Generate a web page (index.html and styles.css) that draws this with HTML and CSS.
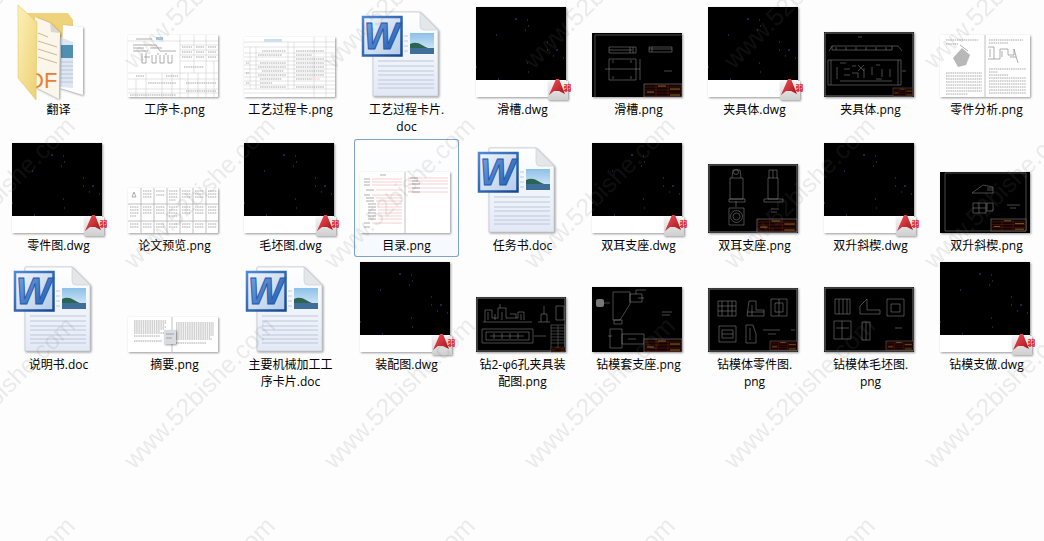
FILE: index.html
```html
<!DOCTYPE html>
<html lang="zh-CN">
<head>
    <meta charset="UTF-8">
    <title>Explorer</title>
    <link rel="stylesheet" href="styles.css">
</head>
<body>
    <!-- shared drawings -->
    <svg class="defs">
        <defs>
            <linearGradient id="pageFill" x1="0" y1="0" x2="0" y2="1">
                <stop offset="0" stop-color="#ffffff"/>
                <stop offset="1" stop-color="#e2e9f6"/>
            </linearGradient>
            <linearGradient id="tileFill" x1="0" y1="0" x2="1" y2="1">
                <stop offset="0" stop-color="#f1f5fb"/>
                <stop offset="1" stop-color="#b4cbe8"/>
            </linearGradient>
            <linearGradient id="tileEdge" x1="0" y1="0" x2="1" y2="1">
                <stop offset="0" stop-color="#4f8ad6"/>
                <stop offset="1" stop-color="#17478f"/>
            </linearGradient>
            <linearGradient id="wFill" x1="0" y1="0" x2="1" y2="1">
                <stop offset="0" stop-color="#7aa9e6"/>
                <stop offset="1" stop-color="#174fa8"/>
            </linearGradient>
            <linearGradient id="skyFill" x1="0" y1="0" x2="0" y2="1">
                <stop offset="0" stop-color="#8cc0e8"/>
                <stop offset="1" stop-color="#e2f0f8"/>
            </linearGradient>
            <linearGradient id="flapFill" x1="0" y1="0" x2="1" y2="1">
                <stop offset="0" stop-color="#fdf0b8"/>
                <stop offset="1" stop-color="#ecd071"/>
            </linearGradient>
            <linearGradient id="badgeFill" x1="0" y1="0" x2="0" y2="1">
                <stop offset="0" stop-color="#f4f4f4"/>
                <stop offset="1" stop-color="#cfcfcf"/>
            </linearGradient>
            <linearGradient id="aFill" x1="0" y1="0" x2="1" y2="1">
                <stop offset="0" stop-color="#f2555a"/>
                <stop offset="1" stop-color="#a5101a"/>
            </linearGradient>
            <pattern id="wmTile" width="200" height="200" patternUnits="userSpaceOnUse">
                <text class="wm-text" transform="translate(134 70) rotate(-45)">www.52bishe.com</text>
                <text class="wm-text" transform="translate(-66 70) rotate(-45)">www.52bishe.com</text>
                <text class="wm-text" transform="translate(134 270) rotate(-45)">www.52bishe.com</text>
                <text class="wm-text" transform="translate(-66 270) rotate(-45)">www.52bishe.com</text>
            </pattern>

            <g id="doc">
                <g class="sh">
                    <path d="M15 9H62L80 27V93H15Z" fill="url(#pageFill)" stroke="#c6cad1" stroke-width=".8"/>
                </g>
                <path d="M62 9L80 27H66Q62 27 62 23Z" fill="#e4e7ea" stroke="#c6cad1" stroke-width=".6"/>
                <path class="doc-lines" d="M20 58H76M20 63H76M20 68H76M20 72H76M20 77H76M20 81H76M20 85H76M46 33H50M46 38H50M46 43H50M46 48H50"/>
                <rect x="52" y="30" width="24" height="21" fill="url(#skyFill)"/>
                <path d="M52 41Q58 38 64 42T76 46V48H52Z" fill="#2b6450"/>
                <rect x="52" y="45" width="24" height="6" fill="#3d6f99"/>
                <rect x="5" y="14" width="38.500" height="38.500" fill="url(#tileFill)" stroke="url(#tileEdge)" stroke-width="2.500"/>
                <text class="word-w" x="6" y="46">W</text>
            </g>

            <g id="dots">
                <path class="dot-a" d="M41 16h2M22 32h1M73 47h1M82 47h2M24 76h1"/>
                <path class="dot-b" d="M53 17h1M51 27h1M54 23h1M73 39h1M79 53h1M89 55h1M53 60h1M54 69h1M2 64h1"/>
            </g>

            <g id="dwg">
                <g class="sh">
                    <rect x="2" y="4" width="90" height="90" fill="#fff"/>
                </g>
                <rect x="2" y="4" width="90" height="73" fill="#000"/>
                <use href="#dots"/>
                <g class="sh">
                    <rect x="74" y="78" width="20" height="19" fill="url(#badgeFill)"/>
                </g>
                <path d="M75 92L82 76H85L91 91L85 88H80Z" fill="url(#aFill)"/>
                <text class="badge-text" x="89.500" y="88">弱</text>
            </g>

            <g id="tb">
                <rect width="38" height="13" fill="#120402" stroke="#999" stroke-width=".5"/>
                <path class="tb-red" d="M1 3H37M1 6H37M1 9H37M1 12H37M12 0V13M24 0V13"/>
                <path class="tb-yel" d="M14 2H22M26 5H36M3 8H10M26 11H36"/>
            </g>
        </defs>
    </svg>

    <div class="files">
        <!-- row 1 -->
        <div class="item">
            <svg class="thumb">
                <path d="M8 2L13 10H58L63 17V40H8Z" fill="#eed27c"/>
                <g class="sh"><path d="M53 22L73 24V92L50 85Z" fill="#fff"/></g>
                <path d="M50 34L63 39V85L50 84Z" fill="#dde6f2"/>
                <rect x="51" y="42" width="12" height="13" fill="#4f8fb0"/>
                <path class="doc-lines" d="M51 59H63M51 63H63M51 67H63M51 71H63M51 75H63M51 79H63"/>
                <g class="sh"><path d="M25 14L40 20L50 30L49 96L25 84Z" fill="#fbf6ea"/></g>
                <path d="M40 20L50 30L41 29Z" fill="#dcd8cf"/>
                <path class="pdf-lines" d="M28 30L38 34M28 38L47 44M28 46L47 52M28 54L47 60"/>
                <text class="pdf-text" x="18" y="85">DF</text>
                <path d="M8 2L27 19L26 97L8 75Z" fill="url(#flapFill)" stroke="#dcbc58" stroke-width=".5"/>
            </svg>
            <div class="label">翻译</div>
        </div>
        <div class="item">
            <svg class="thumb">
                <g class="sh"><rect x="2" y="32" width="90" height="62" fill="#fff"/></g>
                <path class="sheet-line" d="M2 38H92M2 70H92M2 76H92M2 86H92M2 90H92M54 32V94M68 32V70M80 32V94M20 70V94M36 70V94M62 70V94M72 70V94M54 42H92M54 47H92M54 52H92M54 58H92M10 76V94M46 70V94M88 58V94"/>
                <rect x="30" y="34" width="7" height="3" fill="#a9cbea"/>
                <path class="sheet-dark" d="M7 42H30L34 48H50M7 48H22M16 50V60H20V50M26 52V60H30V52M34 52V60H38V52M42 52V60H46V52M10 36H26M7 45H18M24 45H36M18 54H24M32 50V52M40 50V52"/>
                <path class="sheet-text" d="M56 44H66M70 44H78M82 44H90M56 49H66M70 49H78M82 49H90M56 54H66M70 54H78M82 54H90M58 64H78M10 73H18M40 73H52M22 80H50M60 80H90M60 88H90M4 92H50"/>
            </svg>
            <div class="label">工序卡.png</div>
        </div>
        <div class="item">
            <svg class="thumb">
                <g class="sh"><rect x="2" y="34" width="91" height="60" fill="#fff"/></g>
                <path class="sheet-line" d="M2 39H93M2 44H93M2 50H93M2 54H93M2 58H93M2 62H93M2 66H93M2 70H93M2 74H93M2 78H93M2 82H93M2 86H93M2 90H93M8 44V86M14 44V86M46 39V86M52 39V86M72 34V94M84 34V94"/>
                <rect x="22" y="36" width="18" height="3" fill="#cfe0f0"/>
                <path class="sheet-text" d="M20 48H44M16 52H40M18 60H44M16 64H44M20 68H42M16 72H44M18 76H40M18 80H30M18 84H44M54 48H82M54 52H70M54 56H82M54 60H82M54 64H82M54 68H82M54 72H82M54 76H70M54 84H82M4 60H7M4 70H7M4 80H7"/>
                <path class="pink" d="M70 76H78"/>
            </svg>
            <div class="label">工艺过程卡.png</div>
        </div>
        <div class="item item-doc">
            <svg class="thumb"><use href="#doc"/></svg>
            <div class="label">工艺过程卡片.<br>doc</div>
        </div>
        <div class="item">
            <svg class="thumb"><use href="#dwg"/></svg>
            <div class="label">滑槽.dwg</div>
        </div>
        <div class="item">
            <svg class="thumb">
                <g class="sh"><rect x="2" y="30" width="90" height="64" fill="#000"/></g>
                <path class="cad" d="M5 32V94M5 32H92M19 44H46V50H19ZM19 47H42M40 44V50M43 44V50M59 44H82V49H59ZM62 44V49M59 46H82M19 56H46V77H19ZM15 66H50M23 57V60M41 57V60M23 73V76M41 73V76M50 56V77M74 68H82"/>
                <use href="#tb" x="54" y="81"/>
            </svg>
            <div class="label">滑槽.png</div>
        </div>
        <div class="item">
            <svg class="thumb"><use href="#dwg"/></svg>
            <div class="label">夹具体.dwg</div>
        </div>
        <div class="item">
            <svg class="thumb">
                <g class="sh"><rect x="2" y="29" width="90" height="65" fill="#000"/></g>
                <rect class="cad-frame" x="3" y="30" width="88" height="63"/>
                <path class="cad" d="M7 48L10 43H76L80 48M10 43V47H70V43M14 47V44M24 47V44M34 47V44M44 47V44M54 47V44M64 47V44M36 34H40M6 57H79V82H6ZM9 57V82M76 57V82M15 64V76M30 63H34M30 70H36V75M42 65V75M50 64V72M60 66V74M68 66V74M80 68H84M18 60H24M18 78H70M22 66H28M22 72H28M36 62L42 68M36 68L42 62M54 62H58M54 76H60"/>
                <use href="#tb" transform="translate(71 85) scale(.52 .62)"/>
            </svg>
            <div class="label">夹具体.png</div>
        </div>
        <div class="item">
            <svg class="thumb">
                <g class="sh"><rect x="2" y="32" width="90" height="62" fill="#fff"/></g>
                <path class="gutter" d="M47 32V94"/>
                <path class="sheet-fill" d="M15 55L24 45L32 52L28 62L20 64Z"/>
                <path class="sheet-dark" d="M22 42L30 48M50 44H56V56H62V46H70V52H76V46L80 60M56 56H50M52 46V54M64 48V54M72 54H78"/>
                <path class="sheet-text" d="M8 37H40M8 41H20M8 70H44M8 73H44M8 76H44M8 79H44M8 82H44M8 85H44M8 88H44M8 91H30M51 37H85M51 40H70M51 66H88M51 69H60M51 72H70M51 75H88M51 78H88M51 81H88M51 84H88M51 87H88M51 90H88"/>
            </svg>
            <div class="label">零件分析.png</div>
        </div>

        <!-- row 2 -->
        <div class="item">
            <svg class="thumb"><use href="#dwg"/></svg>
            <div class="label">零件图.dwg</div>
        </div>
        <div class="item">
            <svg class="thumb">
                <g class="sh"><rect x="2" y="49" width="90" height="45" fill="#fff"/></g>
                <path class="gutter" d="M15 49V94M28 49V94M41 49V94M54 49V94M67 49V94M80 49V94M2 65H92M2 82H92"/>
                <path class="sheet-dark" d="M8 53L10 58L6 58Z"/>
                <path class="sheet-text" d="M17 52H26M17 55H26M17 58H26M30 52H39M30 56H39M43 52H52M43 55H52M43 58H52M43 61H50M56 52H65M56 55H65M56 58H65M69 52H78M69 55H78M69 58H78M82 52H91M82 55H91M82 58H91M4 68H13M4 71H13M4 74H13M4 77H10M17 68H26M17 71H26M17 74H26M30 68H39M30 71H39M30 74H39M43 68H52M43 71H52M43 74H52M43 77H52M56 68H65M56 71H65M56 74H65M69 68H78M69 71H78M69 74H78M82 68H91M82 71H91M82 74H91M4 85H13M4 88H13M17 85H26M17 88H26M30 85H39M30 88H39M43 85H52M43 88H52M56 85H65M56 88H65M69 85H78M69 88H78M82 85H91M82 88H91"/>
            </svg>
            <div class="label">论文预览.png</div>
        </div>
        <div class="item">
            <svg class="thumb"><use href="#dwg"/></svg>
            <div class="label">毛坯图.dwg</div>
        </div>
        <div class="item is-selected">
            <svg class="thumb">
                <g class="sh"><rect x="2" y="33" width="90" height="61" fill="#fff"/></g>
                <path class="gutter" d="M47 33V94"/>
                <path class="pink" d="M14 40H44M14 43H44M14 46H44M18 51H44M14 56H44M18 59H44M18 62H44M20 65H44M20 68H44M20 71H44M20 74H44M20 77H44M20 80H44M14 84H44M50 39H90M50 42H90M50 45H90M50 49H90M50 53H90"/>
                <path class="sheet-dark" d="M6 40H12M6 43H12M6 46H12M8 51H16M6 56H12M8 59H16M8 62H16M10 65H18M10 68H18M10 71H18M10 74H18M10 77H18M10 80H18M6 84H12M6 88H12M52 39H60M54 42H60M54 45H62M54 49H62M54 53H62M22 36H28"/>
            </svg>
            <div class="label">目录.png</div>
        </div>
        <div class="item">
            <svg class="thumb"><use href="#doc"/></svg>
            <div class="label">任务书.doc</div>
        </div>
        <div class="item">
            <svg class="thumb"><use href="#dwg"/></svg>
            <div class="label">双耳支座.dwg</div>
        </div>
        <div class="item">
            <svg class="thumb">
                <g class="sh"><rect x="2" y="25" width="90" height="69" fill="#000"/></g>
                <rect class="cad-frame" x="3" y="26" width="88" height="67"/>
                <path class="cad" d="M24 39H37V60H24ZM26 39L27 31H34L35 39M23 60H39V63H23ZM23 69H38V86H23ZM62 39H72V60H62ZM63 39V31H71V39M58 60H77V63H58ZM65 70H73M65 73H71M67 31V39M30 62V68"/>
                <circle class="cad" cx="30.500" cy="77.500" r="6"/>
                <circle class="cad" cx="30.500" cy="77.500" r="3.500"/>
                <circle class="cad" cx="30" cy="33" r="2.500"/>
                <use href="#tb" transform="translate(51 80) scale(1.05 1)"/>
            </svg>
            <div class="label">双耳支座.png</div>
        </div>
        <div class="item">
            <svg class="thumb"><use href="#dwg"/></svg>
            <div class="label">双升斜楔.dwg</div>
        </div>
        <div class="item">
            <svg class="thumb">
                <g class="sh"><rect x="2" y="33" width="90" height="61" fill="#000"/></g>
                <path class="cad" d="M7 34H88V92H7ZM34 54L45 46L55 48V54ZM49 49H55M49 51H55M35 64H48V74H35ZM41 64V74M35 69H48M49 64H55V72H49ZM69 66H82M72 69H78"/>
                <use href="#tb" transform="translate(53 80) scale(.92 .92)"/>
            </svg>
            <div class="label">双升斜楔.png</div>
        </div>

        <!-- row 3 -->
        <div class="item">
            <svg class="thumb"><use href="#doc"/></svg>
            <div class="label">说明书.doc</div>
        </div>
        <div class="item">
            <svg class="thumb">
                <g class="sh"><rect x="2" y="59" width="90" height="35" fill="#fff"/></g>
                <path class="gutter" d="M46 59V94"/>
                <path class="sheet-text" d="M8 63H40M8 65H40M8 67H38M8 69H40M8 71H38M8 73H34M8 75H38M8 78H34M8 83H36M50 65H88M50 67H88M50 69H88M50 71H88M50 73H88M50 75H88M50 77H88M50 79H84M50 81H86M50 85H80"/>
                <g class="sh"><rect x="38" y="72" width="12" height="14" fill="#d9dde2"/></g>
                <path class="sheet-dark" d="M40 76H48M40 80H46"/>
            </svg>
            <div class="label">摘要.png</div>
        </div>
        <div class="item">
            <svg class="thumb"><use href="#doc"/></svg>
            <div class="label">主要机械加工工<br>序卡片.doc</div>
        </div>
        <div class="item">
            <svg class="thumb"><use href="#dwg"/></svg>
            <div class="label">装配图.dwg</div>
        </div>
        <div class="item">
            <svg class="thumb">
                <g class="sh"><rect x="2" y="39" width="90" height="55" fill="#000"/></g>
                <rect class="cad-frame" x="3" y="40" width="88" height="53"/>
                <path class="cad" d="M9 64H58M11 64V52H18V60H24V50H32V60H44V54H50V62M26 50V46M36 56H42V60M14 54V62M21 56V62M28 54V62M47 56V62M64 64H76M67 64V56H73V64M70 56V48M82 48H90V62H82ZM8 71H59V85H8ZM12 74H55V82H12ZM16 78H50M20 75V81M28 75V81M36 75V81M44 75V81M60 78H72"/>
                <rect class="cad-fine" x="77" y="67" width="14" height="27"/>
                <path class="cad-fine" d="M77 70H91M77 73H91M77 76H91M77 79H91M77 82H91M77 85H91M84 67V89"/>
                <use href="#tb" transform="translate(77 89) scale(.37 .38)"/>
            </svg>
            <div class="label">钻2-φ6孔夹具装<br>配图.png</div>
        </div>
        <div class="item">
            <svg class="thumb">
                <g class="sh"><rect x="2" y="29" width="90" height="65" fill="#000"/></g>
                <path class="cad" d="M23 34H40V46L30 62H23ZM40 36H52V44H40ZM46 36V32H56M48 40H54M24 62H32V66H24ZM20 71H32V90H20ZM32 76H54V86H32ZM38 81H46M18 78H22"/>
                <rect class="cad-blob" x="6" y="41" width="8" height="8" rx="2"/>
                <path class="cad" d="M14 45H20M72 54H82M72 57H80"/>
                <use href="#tb" x="54" y="81"/>
            </svg>
            <div class="label">钻模套支座.png</div>
        </div>
        <div class="item">
            <svg class="thumb">
                <g class="sh"><rect x="2" y="30" width="90" height="64" fill="#000"/></g>
                <rect class="cad-frame" x="3" y="31" width="88" height="62"/>
                <path class="cad" d="M12 43H30V58H12ZM16 43V58M22 43V58M26 43V58M12 48H30M12 53H30M43 43H50V52H58V58H41ZM46 47V58M41 54H58M65 41H81V58H65ZM69 45H77V54H69ZM73 41V58M13 68H30V84H13ZM16 72H27V80H16ZM16 76H27M40 67H47L50 76V85H40ZM44 70V82M57 72H74M62 76H70M85 72H89"/>
                <use href="#tb" transform="translate(64 83) scale(.72 .72)"/>
            </svg>
            <div class="label">钻模体零件图.<br>png</div>
        </div>
        <div class="item">
            <svg class="thumb">
                <g class="sh"><rect x="2" y="29" width="90" height="65" fill="#000"/></g>
                <rect class="cad-frame" x="3" y="30" width="88" height="63"/>
                <path class="cad" d="M13 41V56H28V41ZM17 41V56M21 41V56M25 41V56M38 48L45 41V52H58V56H38ZM65 41H82V58H65ZM69 46H78V54H69ZM12 63H29V81H12ZM20 63V81M14 70H27M40 64H48V82H40ZM44 64V82M73 70H80"/>
                <use href="#tb" transform="translate(64 83) scale(.72 .72)"/>
            </svg>
            <div class="label">钻模体毛坯图.<br>png</div>
        </div>
        <div class="item">
            <svg class="thumb"><use href="#dwg"/></svg>
            <div class="label">钻模支做.dwg</div>
        </div>
    </div>

    <svg class="watermark" width="1044" height="541">
        <rect width="1044" height="541" fill="url(#wmTile)"/>
    </svg>
</body>
</html>
```

FILE: styles.css
```css
* {
    margin: 0;
    padding: 0;
    box-sizing: border-box;
}
html, body {
    height: 100%;
}
body {
    position: relative;
    background-color: #fdfdfd;
    overflow: hidden;
    font-family: "Open Sans", "Noto Sans CJK SC", sans-serif;
    font-size: 12px;
    color: #000;
}
.defs {
    display: block;
    width: 0;
    height: 0;
}
.files {
    display: grid;
    grid-template-columns: repeat(9, 116px);
    row-gap: 1px;
    padding-top: 3px;
    align-items: start;
}
.item {
    width: 105px;
    margin-left: 6px;
    border-radius: 3px;
}
.is-selected {
    box-shadow: inset 0 0 0 1px #7da2ce;
    background: linear-gradient(#fefeff, #f6f9fd);
}
.thumb {
    display: block;
    width: 96px;
    height: 94px;
    margin-left: 4px;
    overflow: visible;
}
.label {
    padding: 4px 0 3px;
    line-height: 17px;
    text-align: center;
}

.watermark {
    position: absolute;
    left: 0;
    top: 0;
    pointer-events: none;
}
.wm-text {
    font-family: "Liberation Sans", sans-serif;
    font-size: 25px;
    fill: rgba(110, 110, 110, .13);
}

.sh {
    filter: drop-shadow(1px 1px 1px rgba(0, 0, 0, .4));
}

/* doc icon */
.doc-lines {
    fill: none;
    stroke: #b5bdcf;
    stroke-width: .8;
}
.word-w {
    font-family: "Liberation Sans", sans-serif;
    font-size: 37px;
    font-weight: bold;
    font-style: italic;
    fill: url(#wFill);
    stroke: #1d56ad;
    stroke-width: .9;
}

/* folder */
.pdf-lines {
    fill: none;
    stroke: #c9a27a;
    stroke-width: .8;
}
.pdf-text {
    font-family: "Liberation Sans", sans-serif;
    font-size: 22px;
    fill: #e5812e;
}

/* dwg */
.dot-a {
    fill: none;
    stroke: #55417f;
    stroke-width: 1;
}
.dot-b {
    fill: none;
    stroke: #3b4a5a;
    stroke-width: 1;
}
.badge-text {
    font-family: "Noto Sans CJK SC", sans-serif;
    font-size: 8px;
    font-weight: bold;
    fill: #e0222c;
}

/* cad sheets */
.cad {
    fill: none;
    stroke: #909090;
    stroke-width: .5;
}
.cad-fine {
    fill: none;
    stroke: #777;
    stroke-width: .5;
}
.cad-frame {
    fill: none;
    stroke: #777;
    stroke-width: 1;
}
.cad-blob {
    fill: #777;
}
.tb-red {
    fill: none;
    stroke: #8a2018;
    stroke-width: .4;
}
.tb-yel {
    fill: none;
    stroke: #c9b030;
    stroke-width: .6;
}

/* white sheets */
.sheet-line {
    fill: none;
    stroke: #c4c4c4;
    stroke-width: .5;
}
.sheet-dark {
    fill: none;
    stroke: #8a8a8a;
    stroke-width: .7;
}
.sheet-fill {
    fill: #b8b8b8;
}
.sheet-text {
    fill: none;
    stroke: #909090;
    stroke-width: .8;
    stroke-dasharray: 1.500 .7;
}
.gutter {
    fill: none;
    stroke: #b0b0b0;
    stroke-width: .8;
}
.pink {
    fill: none;
    stroke: #f6cfcf;
    stroke-width: 1;
}
```
